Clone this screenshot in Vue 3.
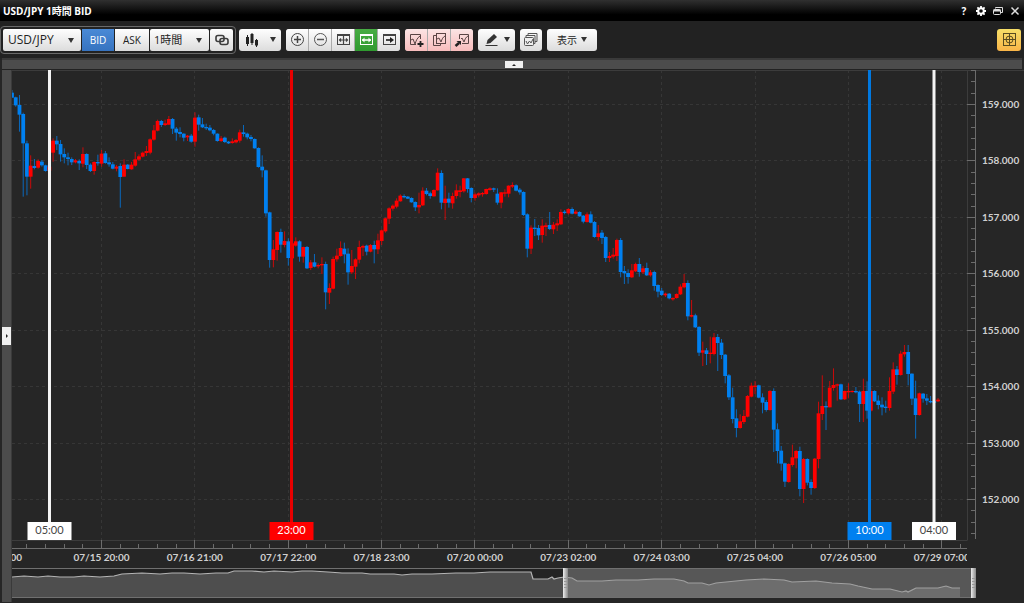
<script setup>
import { ref, computed } from 'vue'

const pair = ref('USD/JPY')
const period = ref('1時間')
const side = ref('BID')

const PLOT_W = 955
const PLOT_H = 470
const AXIS_X = 963.5
const AXIS_Y = 478.5
const BAR_STEP = 3.734
const FIRST_LINE = 89.5
const DAY_STEP = 93.36
const YEN_STEP = 56.43
const TOP_PRICE_Y = 34.5

// 四本値 [高値, 始値, 終値, 安値]：上端からの距離（1/3px単位）
const candles = [
  [60, 68, 83, 83], [80, 82, 106, 110], [75, 105, 134, 185], [128, 132, 220, 380], [212, 220, 320, 376],
  [256, 320, 287, 356], [267, 288, 294, 298], [268, 293, 273, 296], [270, 275, 286, 290], [284, 286, 303, 305],
  [288, 302, 290, 304], [205, 248, 212, 275], [198, 212, 223, 240], [210, 222, 253, 275], [235, 252, 262, 280],
  [248, 262, 267, 286], [262, 267, 277, 285], [267, 277, 271, 280], [268, 273, 280, 300], [232, 281, 252, 292],
  [250, 252, 285, 297], [280, 284, 303, 306], [274, 303, 276, 314], [254, 276, 280, 287], [240, 281, 251, 290],
  [243, 250, 279, 281], [262, 277, 283, 290], [276, 283, 296, 298], [285, 296, 290, 304], [280, 288, 321, 413],
  [268, 320, 284, 320], [282, 284, 297, 298], [276, 298, 284, 299], [246, 287, 268, 290], [253, 269, 259, 272],
  [245, 260, 248, 262], [228, 249, 243, 258], [205, 248, 208, 253], [165, 209, 181, 212], [149, 182, 153, 184],
  [150, 153, 165, 171], [149, 165, 160, 168], [138, 164, 147, 165], [144, 147, 176, 192], [171, 176, 188, 212],
  [172, 186, 192, 202], [190, 191, 203, 214], [195, 202, 197, 213], [192, 197, 215, 218], [127, 215, 143, 230],
  [134, 142, 164, 182], [144, 163, 172, 174], [161, 171, 175, 180], [165, 173, 181, 184], [177, 180, 191, 196],
  [190, 191, 213, 215], [198, 213, 205, 216], [200, 203, 216, 219], [213, 215, 220, 222], [205, 219, 214, 221],
  [207, 217, 210, 220], [179, 212, 187, 218], [165, 187, 192, 200], [188, 191, 202, 208], [195, 201, 207, 214],
  [205, 207, 235, 236], [232, 234, 291, 293], [256, 290, 301, 322], [299, 301, 430, 440], [425, 427, 570, 593],
  [510, 570, 538, 592], [484, 540, 486, 572], [476, 486, 524, 548], [484, 525, 513, 532], [505, 514, 564, 587],
  [518, 565, 520, 566], [502, 527, 514, 530], [511, 514, 560, 575], [530, 560, 531, 578], [528, 531, 595, 597],
  [570, 594, 577, 600], [552, 577, 590, 592], [580, 589, 585, 595], [562, 586, 582, 612], [575, 582, 667, 718],
  [640, 668, 654, 702], [560, 656, 567, 658], [536, 568, 557, 575], [514, 558, 534, 560], [518, 536, 553, 580],
  [535, 551, 607, 644], [540, 607, 588, 612], [565, 590, 568, 627], [512, 569, 531, 580], [524, 533, 528, 558],
  [524, 527, 545, 556], [522, 545, 525, 547], [512, 525, 538, 580], [491, 538, 511, 552], [478, 513, 481, 525],
  [443, 484, 445, 488], [412, 446, 415, 462], [403, 416, 407, 422], [385, 410, 392, 415], [373, 394, 377, 395],
  [373, 378, 382, 385], [378, 380, 386, 387], [382, 384, 397, 398], [394, 396, 412, 423], [368, 412, 405, 430],
  [352, 406, 362, 408], [354, 362, 372, 376], [365, 370, 378, 386], [358, 379, 360, 380], [295, 361, 308, 362],
  [301, 309, 398, 418], [347, 399, 386, 450], [368, 386, 398, 413], [368, 400, 378, 416], [343, 378, 361, 386],
  [347, 366, 361, 382], [324, 364, 325, 368], [324, 325, 357, 368], [352, 354, 384, 397], [368, 384, 373, 392],
  [367, 376, 370, 382], [366, 373, 369, 380], [356, 372, 357, 374], [352, 360, 355, 362], [353, 355, 359, 366],
  [355, 371, 398, 404], [366, 398, 367, 415], [358, 371, 367, 380], [346, 371, 347, 382], [337, 350, 345, 354],
  [343, 346, 362, 364], [354, 359, 367, 374], [364, 366, 435, 438], [430, 433, 536, 562], [466, 536, 473, 552],
  [447, 473, 477, 498], [465, 474, 496, 510], [448, 495, 467, 518], [458, 471, 466, 498], [426, 465, 477, 480],
  [456, 478, 464, 492], [448, 466, 460, 483], [418, 463, 426, 465], [420, 425, 429, 433], [415, 430, 417, 434],
  [412, 417, 431, 433], [420, 431, 425, 433], [424, 426, 439, 440], [435, 437, 455, 460], [427, 456, 433, 458],
  [424, 433, 458, 460], [453, 456, 501, 503], [465, 501, 490, 512], [480, 488, 504, 522], [498, 501, 564, 576],
  [546, 564, 558, 576], [534, 560, 554, 566], [506, 558, 510, 573], [504, 510, 606, 622], [588, 603, 610, 642],
  [598, 609, 621, 641], [582, 622, 601, 624], [578, 604, 582, 606], [564, 582, 606, 620], [588, 607, 595, 612],
  [578, 594, 616, 618], [600, 616, 607, 620], [602, 606, 648, 662], [643, 645, 665, 682], [654, 662, 675, 678],
  [668, 676, 671, 681], [669, 671, 685, 688], [682, 688, 684, 692], [670, 684, 672, 686], [643, 673, 650, 675],
  [612, 652, 639, 655], [631, 639, 739, 751], [690, 740, 735, 742], [731, 736, 772, 774], [768, 771, 848, 858],
  [815, 848, 841, 888], [834, 841, 852, 885], [800, 852, 848, 880], [789, 852, 802, 856], [792, 801, 819, 903],
  [807, 818, 855, 867], [852, 854, 918, 940], [912, 916, 982, 990], [953, 982, 1047, 1060], [1018, 1045, 1074, 1102],
  [1033, 1074, 1054, 1076], [1020, 1056, 1038, 1062], [975, 1040, 978, 1042], [938, 980, 947, 982], [933, 951, 947, 972],
  [944, 946, 983, 985], [970, 982, 998, 1030], [990, 996, 1020, 1025], [960, 1020, 963, 1022], [955, 963, 1079, 1146],
  [1060, 1078, 1143, 1180], [1128, 1142, 1181, 1202], [1178, 1180, 1235, 1251], [1180, 1236, 1182, 1238], [1124, 1185, 1162, 1190],
  [1140, 1165, 1143, 1195], [1130, 1143, 1257, 1279], [1164, 1257, 1167, 1299], [1165, 1167, 1238, 1246], [1228, 1236, 1254, 1274],
  [1164, 1254, 1166, 1257], [995, 1167, 1030, 1195], [916, 1032, 1008, 1050], [994, 1008, 1012, 1080], [933, 1012, 953, 1012],
  [895, 954, 945, 962], [941, 947, 943, 992], [941, 943, 988, 990], [962, 988, 963, 990], [940, 967, 963, 985],
  [961, 966, 963, 968], [951, 963, 967, 970], [962, 965, 1002, 1056], [926, 1002, 963, 1056], [934, 963, 1022, 1046],
  [955, 1022, 963, 1025], [961, 963, 994, 996], [976, 992, 1005, 1018], [982, 1004, 1012, 1036], [992, 1010, 1014, 1028],
  [922, 1014, 963, 1022], [877, 965, 898, 972], [888, 898, 915, 944], [842, 915, 851, 917], [825, 853, 846, 860],
  [825, 846, 912, 946], [910, 911, 986, 1005], [932, 985, 1035, 1106], [968, 1035, 970, 1037], [969, 971, 986, 998],
  [972, 985, 992, 1005], [978, 993, 997, 1000], [990, 994, 998, 1000], [984, 994, 989, 996]
]

const bars = computed(() => candles.map(([high, open, close, low], i) => ({
  x: i * BAR_STEP,
  high: high / 3,
  low: low / 3,
  top: Math.min(open, close) / 3,
  height: Math.max(Math.abs(open - close) / 3, 1),
  color: close < open ? '#ff0000' : '#0080f0'
})))

const prices = ['159.000', '158.000', '157.000', '156.000', '155.000', '154.000', '153.000', '152.000']
  .map((text, i) => ({ text, y: TOP_PRICE_Y + i * YEN_STEP }))

const dates = ['07/15 20:00', '07/16 21:00', '07/17 22:00', '07/18 23:00', '07/20 00:00', '07/23 02:00', '07/24 03:00', '07/25 04:00', '07/26 05:00', '07/29 07:00']
  .map((text, i) => ({ text, x: FIRST_LINE + i * DAY_STEP }))

// 線を1pxに揃える
const snap = (v) => Math.floor(v) + 0.5

// 補助目盛り
const minorY = []
for (let i = -3; i < 39; i++) {
  const y = TOP_PRICE_Y + i * YEN_STEP / 5
  if (i % 5 !== 0 && y > 0 && y < 468) minorY.push(y)
}
const minorX = []
for (let i = -4; i < 47; i++) {
  const x = FIRST_LINE + i * DAY_STEP / 5
  if (i % 5 !== 0 && x < PLOT_W) minorX.push(x)
}

const markers = [
  { time: '05:00', x: 37.5, color: '#ffffff', line: '#f4f4f4', text: '#444444' },
  { time: '23:00', x: 279.5, color: '#ff0000', line: '#e80000', text: '#ffffff' },
  { time: '10:00', x: 857.5, color: '#0080f0', line: '#0078e0', text: '#ffffff' },
  { time: '04:00', x: 922, color: '#ffffff', line: '#f4f4f4', text: '#444444' }
]

// ナビゲーターの折れ線
const overview = '0,9 12,8 26,9 36,8 48,9 62,9 72,8 88,9 102,8 110,6 130,5 148,6 160,5 172,5 188,6 204,5 216,5 222,3 240,3 252,4 262,3 280,4 290,3 300,3 316,4 330,5 350,5 358,6 382,6 390,7 400,6 420,6 444,5 462,5 478,4 500,4 519,4 521,11 536,11 540,9 542,11 546,10 552,9 560,10 565,13 590,13 604,12 626,12 642,11 662,11 672,13 676,15 690,15 697,17 704,15 714,14 734,12 752,11 772,12 780,14 804,13 820,15 838,16 846,18 860,21 878,21 890,24 894,23 896,24 904,20 926,20 934,18 940,20 948,20'
</script>

<template>
  <div class="window">
    <header class="titlebar">
      <h1>USD/JPY 1時間 BID</h1>
      <div class="window-buttons">
        <button aria-label="ヘルプ">?</button>
        <button aria-label="設定">
          <svg width="12" height="12" viewBox="0 0 12 12">
            <circle cx="6" cy="6" r="2.8" fill="none" stroke="#fff" stroke-width="2" />
            <path d="M6 1v2M6 9v2M1 6h2M9 6h2M2.4 2.4l1.5 1.5M8.1 8.1l1.5 1.5M9.6 2.4L8.1 3.9M3.9 8.1L2.4 9.6" stroke="#fff" stroke-width="1.8" />
          </svg>
        </button>
        <button aria-label="元に戻す">
          <svg width="12" height="12" viewBox="0 0 12 12" fill="none" stroke="#ddd">
            <path d="M3.5 3.5v-1h7v5H9" />
            <rect x="1.5" y="4.5" width="7" height="5" rx="1" />
            <path d="M1.5 5.5h7" stroke-width="2" />
          </svg>
        </button>
        <button aria-label="閉じる">
          <svg width="12" height="12" viewBox="0 0 12 12"><path d="M2.5 2.5l7 7M9.5 2.5l-7 7" stroke="#ddd" stroke-width="1.5" /></svg>
        </button>
      </div>
    </header>

    <div class="toolbar">
      <div class="framed">
        <label class="drop pair">
          <select v-model="pair" aria-label="通貨ペア"><option>USD/JPY</option></select>
          <span class="arrow"></span>
        </label>
        <button class="side" :class="{ active: side === 'BID' }" @click="side = 'BID'">BID</button>
        <button class="side ask" :class="{ active: side === 'ASK' }" @click="side = 'ASK'">ASK</button>
        <label class="drop period">
          <select v-model="period" aria-label="足種"><option>1時間</option></select>
          <span class="arrow"></span>
        </label>
        <button class="link" aria-label="連動">
          <svg width="16" height="14" viewBox="0 0 16 14" fill="none" stroke="#3c3c3c" stroke-width="1.6">
            <rect x="2" y="2.5" width="8" height="6" rx="2" />
            <rect x="6" y="5.5" width="8" height="6" rx="2" />
          </svg>
        </button>
      </div>

      <div class="group">
        <button class="wide" aria-label="チャート種類">
          <svg width="14" height="16" viewBox="0 0 14 16" stroke="#222">
            <path d="M2.5 3v11M7 1v12M11.5 7v8" />
            <path d="M2.5 5v7M7 2v9M11.5 8v5.5" stroke-width="3" />
          </svg>
          <span class="arrow"></span>
        </button>
      </div>

      <div class="group">
        <button aria-label="拡大">
          <svg width="15" height="15" viewBox="0 0 15 15" fill="none" stroke="#444"><circle cx="7.5" cy="7.5" r="6" /><path d="M4 7.5h7M7.5 4v7" stroke-width="1.5" /></svg>
        </button>
        <button aria-label="縮小">
          <svg width="15" height="15" viewBox="0 0 15 15" fill="none" stroke="#555"><circle cx="7.5" cy="7.5" r="6" /><path d="M4 7.5h7" stroke-width="1.3" /></svg>
        </button>
        <button aria-label="全方向">
          <svg width="15" height="15" viewBox="0 0 15 15" fill="none" stroke="#444"><rect x="1.5" y="2.5" width="12" height="10" /><path d="M1 3h13" stroke-width="2" /><path d="M3 8h9M7.5 4v8M5 6.5L3.5 8 5 9.5M10 6.5L11.5 8 10 9.5" stroke-width="1.2" /></svg>
        </button>
        <button class="green" aria-label="横方向">
          <svg width="15" height="15" viewBox="0 0 15 15" fill="none" stroke="#fff"><rect x="1.5" y="2.5" width="12" height="10" /><path d="M1 3h13" stroke-width="2" /><path d="M3 8h9" stroke-width="1.5" /><path d="M5.5 5.5L3 8l2.5 2.5zM9.5 5.5L12 8l-2.5 2.5z" fill="#fff" stroke="none" /></svg>
        </button>
        <button aria-label="最新へ">
          <svg width="15" height="15" viewBox="0 0 15 15" fill="none" stroke="#444"><rect x="1.5" y="2.5" width="12" height="10" /><path d="M1 3h13" stroke-width="2" /><path d="M4 8h5" stroke-width="2" /><path d="M8 5l4 3-4 3z" fill="#222" stroke="none" /></svg>
        </button>
      </div>

      <div class="group pink">
        <button aria-label="チャート追加">
          <svg width="16" height="16" viewBox="0 0 16 16" fill="none" stroke="#5a4444"><path d="M12.5 7V2.5h-10v10H8" /><path d="M3 8l2-1 2 5c1-3 2-6 5-8" /><path d="M12.5 9v6M9.5 12h6" stroke="#222" stroke-width="1.8" /></svg>
        </button>
        <button aria-label="チャート複製">
          <svg width="16" height="16" viewBox="0 0 16 16" fill="none" stroke="#5a4444"><path d="M5 3.5H2.5v10h7V12" /><rect x="5.5" y="1.5" width="9" height="10" /><path d="M6 7l2-1 2 4c1-3 2-5 4-6" /></svg>
        </button>
        <button aria-label="チャート呼出">
          <svg width="16" height="16" viewBox="0 0 16 16" fill="none" stroke="#5a4444"><path d="M5.5 7V2.5h9v9H8" /><path d="M7 7l1-1 2 4c1-3 2-5 4-6" /><path d="M1.500 14L5 11" stroke="#222" stroke-width="2.5" /><path d="M2.500 9h4.500v4z" fill="#222" stroke="none" /></svg>
        </button>
      </div>

      <div class="group">
        <button class="pen" aria-label="描画">
          <svg width="16" height="16" viewBox="0 0 16 16"><path d="M2.5 12l1-4 6.500-6 3 3-6.500 6z" fill="#333" /><path d="M1.5 13.500h12" stroke="#333" /></svg>
          <span class="arrow"></span>
        </button>
      </div>

      <div class="group">
        <button aria-label="チャート一覧">
          <svg width="16" height="16" viewBox="0 0 16 16" fill="none" stroke="#555"><path d="M5 3.5V1.5h9v8h-2" /><path d="M3 5.5v-2h9v8h-2" /><rect x="1.5" y="5.5" width="9" height="8" rx="1" fill="#eee" /><path d="M3 9l1.5 3L6.5 9 8 11l2-4" /></svg>
        </button>
      </div>

      <div class="group">
        <button class="view">表示<span class="arrow"></span></button>
      </div>

      <button class="layout" aria-label="クロスライン">
        <svg width="15" height="15" viewBox="0 0 15 15" fill="none" stroke="#594c20"><rect x="1.5" y="1.5" width="12" height="12" /><circle cx="7.5" cy="7.5" r="3.5" /><path d="M1 7.5h13M7.5 1v13" /></svg>
      </button>
    </div>

    <div class="splitter">
      <button aria-label="上パネルを開く"><i class="up"></i></button>
    </div>

    <main class="body">
      <aside class="rail">
        <button aria-label="左パネルを開く"><i class="right"></i></button>
      </aside>

      <div class="charts">
        <svg class="chart" viewBox="0 0 1012 498">
          <defs>
            <clipPath id="timeClip"><rect x="0" y="478" width="955" height="20" /></clipPath>
            <clipPath id="plotClip"><rect x="0" y="0" width="955" height="470" /></clipPath>
          </defs>

          <g class="grid">
            <line v-for="p in prices" :key="p.text" x1="0" :x2="PLOT_W" :y1="snap(p.y)" :y2="snap(p.y)" />
            <line v-for="d in dates" :key="d.text" :x1="snap(d.x)" :x2="snap(d.x)" y1="0" :y2="PLOT_H" />
          </g>
          <path class="frame" d="M0 0.5H1012M955.5 0V470M0 470.5H955.5" />

          <g clip-path="url(#plotClip)">
            <g v-for="(b, i) in bars" :key="i" :fill="b.color">
              <rect :x="b.x - 0.5" :y="b.high" width="1" :height="b.low - b.high" opacity="0.75" />
              <rect :x="b.x - 1.9" :y="b.top" width="3.8" :height="b.height" />
            </g>
          </g>

          <g class="axis">
            <path :d="`M${AXIS_X} 0V469M0 ${AXIS_Y}H${PLOT_W}`" />
            <path v-for="p in prices" :key="p.text" :d="`M955 ${snap(p.y)}H${AXIS_X}`" />
            <path v-for="y in minorY" :key="y" :d="`M959 ${snap(y)}H${AXIS_X}`" />
            <path v-for="d in dates" :key="d.text" :d="`M${snap(d.x)} 470V${AXIS_Y}`" />
            <path v-for="x in minorX" :key="x" :d="`M${snap(x)} 474V${AXIS_Y}`" />
          </g>

          <g class="labels">
            <text v-for="p in prices" :key="p.text" x="970" :y="p.y + 3.5">{{ p.text }}</text>
            <g clip-path="url(#timeClip)" text-anchor="middle">
              <text x="-18" y="491">07/14 19:00</text>
              <text v-for="d in dates" :key="d.text" :x="d.x" y="491">{{ d.text }}</text>
            </g>
          </g>

          <g v-for="m in markers" :key="m.time" class="marker">
            <rect :x="m.x - 1.5" y="0" width="3" height="452" :fill="m.line" />
            <rect :x="m.x - 22" y="452" width="44" height="18" :fill="m.color" />
            <text :x="m.x" y="464" :fill="m.text">{{ m.time }}</text>
          </g>
        </svg>

        <svg class="navigator" viewBox="0 0 1012 30">
          <defs>
            <linearGradient id="grip">
              <stop offset="0" stop-color="#eeeeee" />
              <stop offset="1" stop-color="#888888" />
            </linearGradient>
          </defs>
          <rect x="0" y="0" width="964" height="30" fill="#232323" />
          <polygon :points="`0,30 ${overview} 948,30`" fill="#4e4e4e" />
          <polyline :points="overview" fill="none" stroke="#b4b4b4" stroke-width="1.2" />
          <rect x="555" y="0" width="408" height="30" fill="#8c8c8c" opacity="0.5" />
          <path d="M0 0.5H964M0 29.5H964" stroke="#707070" />
          <rect x="551" y="0" width="5" height="30" fill="url(#grip)" />
          <rect x="959" y="0" width="5" height="30" fill="url(#grip)" />
          <path d="M552 10.5h3M552 13.5h3M552 16.5h3M552 19.5h3M960 10.5h3M960 13.5h3M960 16.5h3M960 19.5h3" stroke="#999" />
        </svg>
      </div>
    </main>
  </div>
</template>

<style>
body {
  margin: 0;
  background: #262626;
}
</style>

<style scoped>
.window {
  display: flex;
  flex-direction: column;
  min-height: 100vh;
  box-sizing: border-box;
  background: #262626;
  font-family: 'Open Sans', 'Noto Sans', 'Noto Sans CJK JP', sans-serif;
  overflow: hidden;
}

button,
select {
  margin: 0;
  padding: 0;
  border: 0;
  font-family: inherit;
  cursor: pointer;
}

svg {
  display: block;
}

.titlebar {
  display: flex;
  align-items: center;
  justify-content: space-between;
  height: 21px;
  padding: 0 3px;
  background: linear-gradient(#303030, #000 70%);
  box-sizing: border-box;
}

.titlebar h1 {
  margin: 0;
  font-size: 10px;
  line-height: 18px;
  font-weight: 700;
  color: #fff;
}

.window-buttons {
  display: flex;
  gap: 5px;
}

.window-buttons button {
  display: flex;
  align-items: center;
  justify-content: center;
  width: 12px;
  height: 20px;
  background: none;
  color: #fff;
  font-size: 10px;
  font-weight: 700;
}

.toolbar {
  display: flex;
  align-items: center;
  gap: 5px;
  height: 37px;
  padding-right: 3px;
  background: #222;
}

.framed {
  display: flex;
  gap: 1px;
  padding: 2px;
  border: 1px solid #6a6a6a;
  border-radius: 4px;
}

.group {
  display: flex;
  gap: 1px;
  border-radius: 3px;
  overflow: hidden;
  background: #aaa;
}

.framed + .group {
  margin-left: -2px;
}

.toolbar button,
.drop {
  display: flex;
  align-items: center;
  justify-content: center;
  height: 22px;
  background: linear-gradient(#fefefe, #dcdcdc);
  color: #222;
}

.group button {
  width: 22px;
}

.drop {
  position: relative;
  border-radius: 2px;
}

.drop select {
  width: 100%;
  height: 22px;
  padding-left: 5px;
  appearance: none;
  background: none;
  color: #222;
  font-size: 12px;
}

.drop .arrow {
  position: absolute;
  right: 7px;
  top: 9px;
  pointer-events: none;
}

.arrow {
  border: 3px solid transparent;
  border-top: 5px solid #333;
  border-bottom: 0;
}

.pair {
  width: 78px;
}

.period {
  width: 59px;
}

.period select {
  padding-left: 4px;
  font-size: 11px;
}

.toolbar .side {
  width: 32px;
  font-size: 10px;
}

.toolbar .ask {
  width: 34px;
}

.toolbar .side.active {
  background: linear-gradient(#4a8ad6, #3673c0);
  color: #fff;
}

.toolbar .link {
  width: 23px;
  border-radius: 2px;
}

.toolbar .wide {
  width: 42px;
  gap: 11px;
}

.toolbar .pen {
  width: 37px;
  gap: 4px;
}

.toolbar .view {
  width: 50px;
  gap: 4px;
  font-size: 10px;
}

.toolbar .green {
  background: linear-gradient(#48ac44, #2f9a2f);
}

.toolbar .pink button {
  background: linear-gradient(#fbe4e4, #f8bcbc);
}

.toolbar .layout {
  width: 24px;
  margin-left: auto;
  border-radius: 3px;
  background: linear-gradient(#f7df68, #f9b548);
}

.splitter {
  display: flex;
  justify-content: center;
  height: 9px;
  margin: 0 2px;
  padding-left: 4px;
  border-top: 2px solid #3a3a3a;
  border-bottom: 1px solid #222;
  background: #4c4c4c;
}

.splitter button,
.rail button {
  display: flex;
  align-items: center;
  justify-content: center;
  background: #f0f0f0;
}

.splitter button {
  width: 18px;
  height: 7px;
  margin-top: 1px;
}

.up {
  border: 2px solid transparent;
  border-bottom-color: #222;
  border-top: 0;
}

.right {
  border: 2px solid transparent;
  border-left-color: #222;
  border-right: 0;
}

.body {
  display: flex;
  flex: 1;
}

.rail {
  display: flex;
  align-items: center;
  width: 9px;
  margin: 0 0 1px 2px;
  border-right: 1px solid #3a3a3a;
  background: #4c4c4c;
}

.rail button {
  width: 9px;
  height: 18px;
}

.charts {
  flex: 1;
  min-width: 0;
}

.chart,
.navigator {
  width: 100%;
  height: auto;
}

.grid line {
  stroke: #363636;
  stroke-dasharray: 3 3;
}

.frame {
  fill: none;
  stroke: #3c3c3c;
}

.axis path {
  fill: none;
  stroke: #6c6c6c;
}

.labels text,
.marker text {
  font-family: Lato, 'Open Sans', sans-serif;
  font-size: 10px;
}

.labels text {
  font-weight: 700;
  fill: #d0d0d0;
}

.marker text {
  font-size: 11px;
  text-anchor: middle;
}
</style>
